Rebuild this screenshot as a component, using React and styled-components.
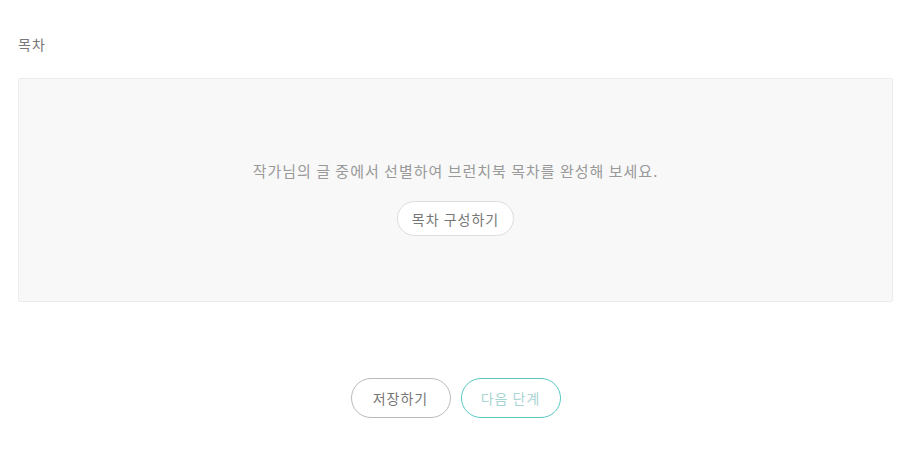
import React from 'react';
import styled, { createGlobalStyle } from 'styled-components';

const GlobalStyle = createGlobalStyle`
  body {
    margin: 0;
    background: #fff;
    font-family: "Noto Sans CJK KR", "Noto Sans", sans-serif;
    letter-spacing: 1px;
  }
`;

function App() {
  return (
    <Page>
      <GlobalStyle />
      <Label>목차</Label>
      <EmptyBox>
        <Guide>작가님의 글 중에서 선별하여 브런치북 목차를 완성해 보세요.</Guide>
        <SmallButton>목차 구성하기</SmallButton>
      </EmptyBox>
      <Actions>
        <ActionButton>저장하기</ActionButton>
        <ActionButton primary disabled>다음 단계</ActionButton>
      </Actions>
    </Page>
  );
}

export default App;

const Page = styled.div`
  padding: 33px 10px 0 18px;
`;

const Label = styled.div`
  font-size: 14px;
  line-height: 22px;
  color: #777;
`;

const EmptyBox = styled.div`
  margin-top: 23px;
  height: 222px;
  border: 1px solid #ececec;
  border-radius: 2px;
  background: #f8f8f8;
  display: flex;
  flex-direction: column;
  align-items: center;
  padding-top: 81px;
  box-sizing: border-box;
  height: 224px;
`;

const Guide = styled.p`
  margin: 0;
  font-size: 15px;
  line-height: 22px;
  color: #999;
`;

const SmallButton = styled.button`
  margin-top: 19px;
  height: 35px;
  padding: 0 14px;
  border: 1px solid #ddd;
  border-radius: 18px;
  background: #fff;
  font-family: inherit;
  letter-spacing: inherit;
  font-size: 14px;
  color: #777;
  cursor: pointer;
`;

const Actions = styled.div`
  margin-top: 76px;
  display: flex;
  justify-content: center;
  gap: 10px;
`;

const ActionButton = styled.button`
  width: 100px;
  height: 40px;
  border: 1px solid ${(p) => (p.primary ? '#5ac8c2' : '#bbb')};
  border-radius: 20px;
  background: #fff;
  font-family: inherit;
  letter-spacing: inherit;
  font-size: 14px;
  color: ${(p) => (p.primary ? '#a9d4d4' : '#777')};
  cursor: pointer;
`;
